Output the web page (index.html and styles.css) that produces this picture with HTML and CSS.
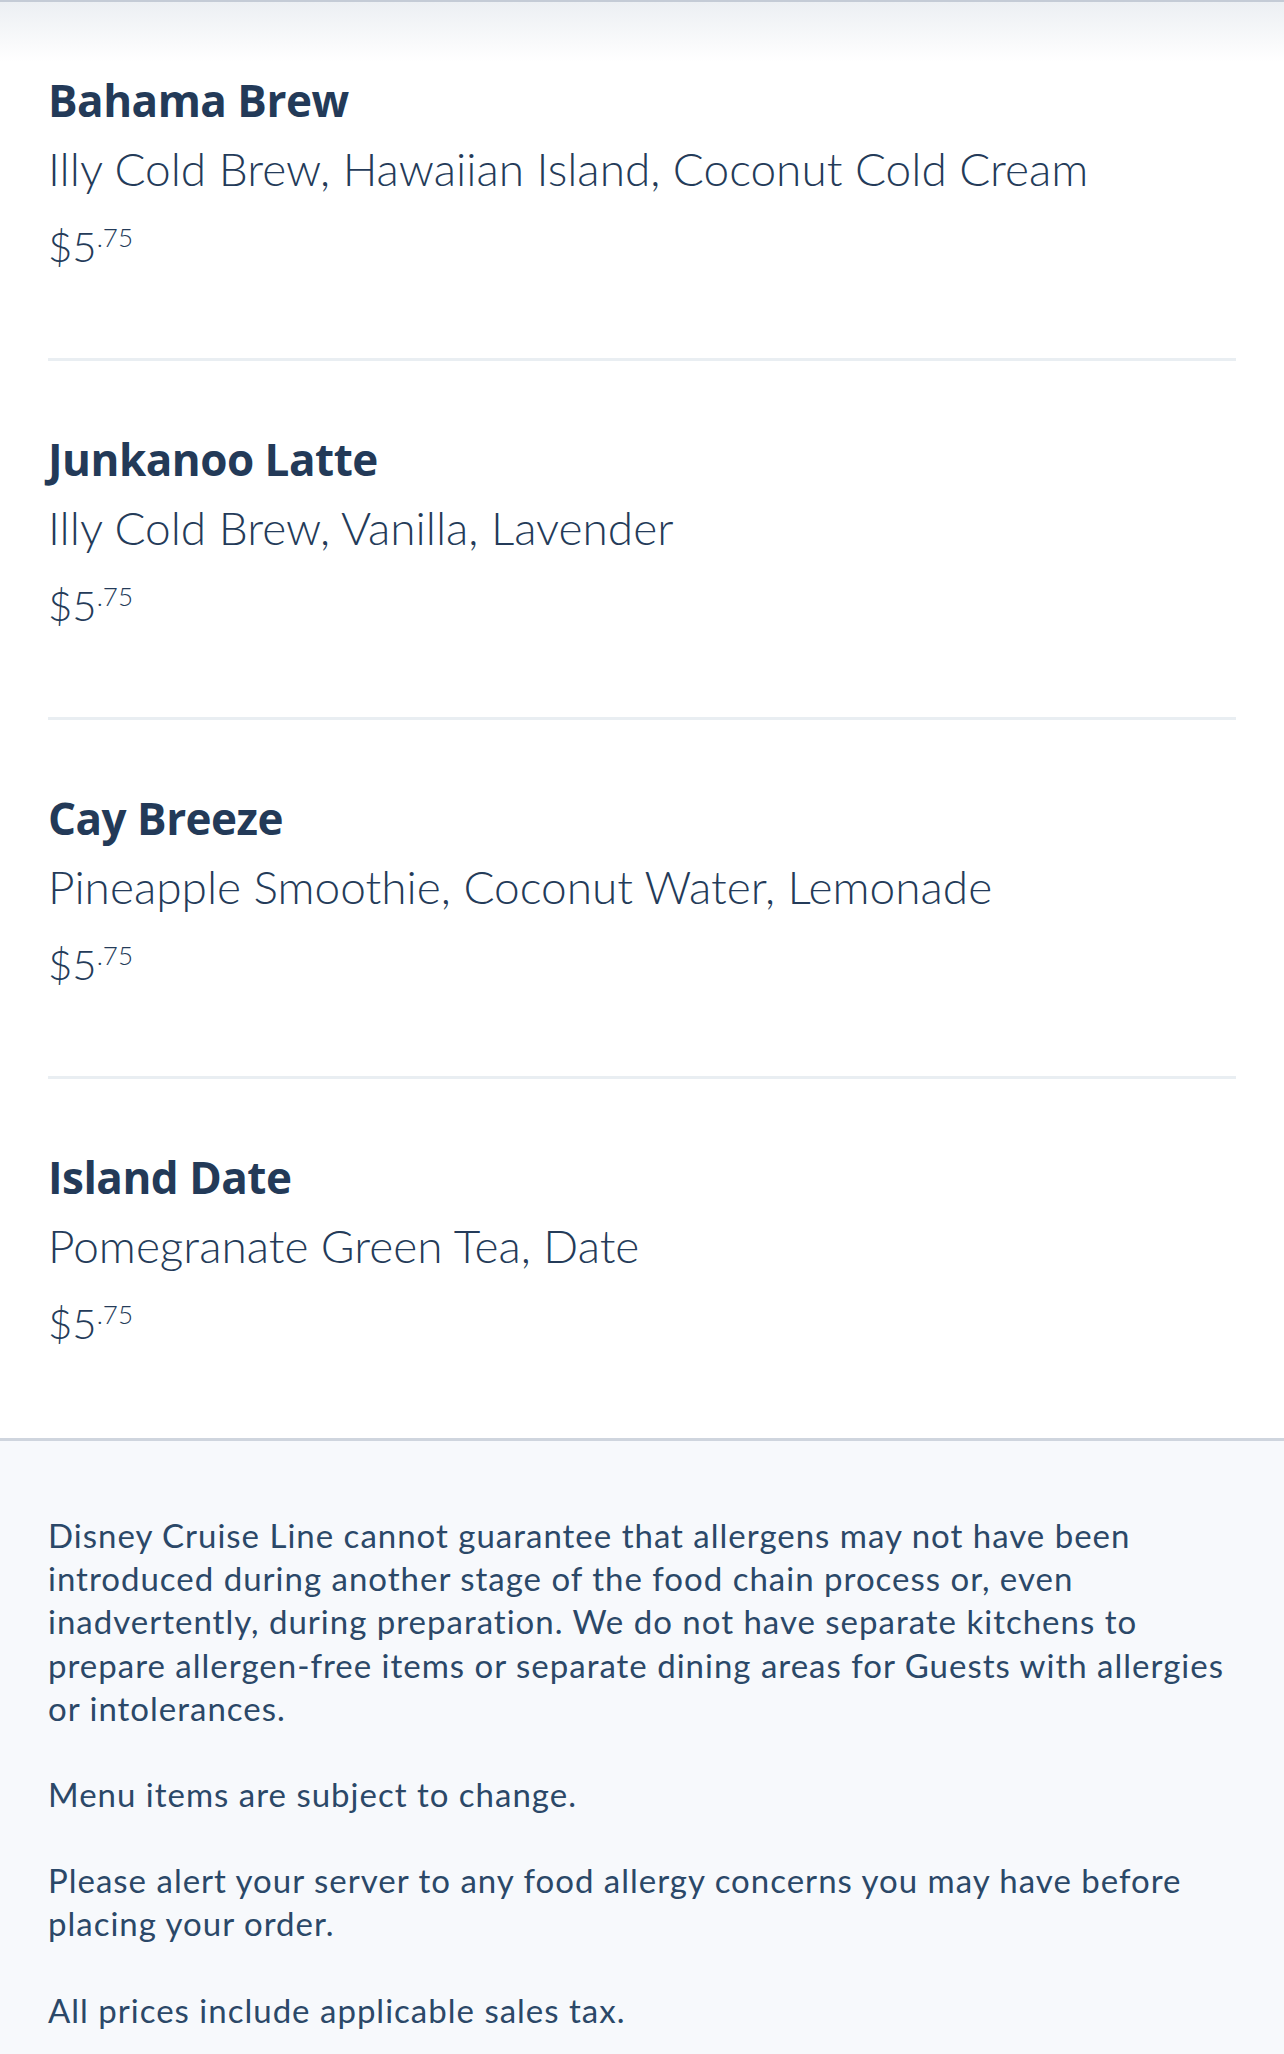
FILE: index.html
```html
<!DOCTYPE html>
<html lang="en">
<head>
<meta charset="utf-8">
<title>Menu</title>
<link rel="stylesheet" href="styles.css">
</head>
<body>
<div class="shade"></div>
<main class="menu">
  <section class="item">
    <h2 class="name">Bahama Brew</h2>
    <p class="desc">Illy Cold Brew, Hawaiian Island, Coconut Cold Cream</p>
    <p class="price">$5<sup>.75</sup></p>
  </section>
  <section class="item">
    <h2 class="name">Junkanoo Latte</h2>
    <p class="desc">Illy Cold Brew, Vanilla, Lavender</p>
    <p class="price">$5<sup>.75</sup></p>
  </section>
  <section class="item">
    <h2 class="name">Cay Breeze</h2>
    <p class="desc">Pineapple Smoothie, Coconut Water, Lemonade</p>
    <p class="price">$5<sup>.75</sup></p>
  </section>
  <section class="item last">
    <h2 class="name">Island Date</h2>
    <p class="desc">Pomegranate Green Tea, Date</p>
    <p class="price">$5<sup>.75</sup></p>
  </section>
</main>
<footer class="notes">
  <p>Disney Cruise Line cannot guarantee that allergens may not have been introduced during another stage of the food chain process or, even inadvertently, during preparation. We do not have separate kitchens to prepare allergen-free items or separate dining areas for Guests with allergies or intolerances.</p>
  <p>Menu items are subject to change.</p>
  <p>Please alert your server to any food allergy concerns you may have before placing your order.</p>
  <p>All prices include applicable sales tax.</p>
</footer>
</body>
</html>
```
FILE: styles.css
```css
* { box-sizing: border-box; }
html, body { margin: 0; padding: 0; background: #ffffff; }
body {
  font-family: Lato, "Open Sans", "Noto Sans", sans-serif;
  color: #243a58;
  position: relative;
  border-top: 2px solid #c4cbd6;
}
.shade {
  position: absolute;
  top: 0; left: 0; right: 0;
  height: 60px;
  background: linear-gradient(to bottom, #eceff3 0%, rgba(255,255,255,0) 100%);
  pointer-events: none;
}
.menu { padding: 0 48px; }
.item {
  padding: 70px 0 76px;
  border-bottom: 3px solid #e9eef2;
}
.item.last { border-bottom: none; padding-bottom: 79px; }
.name {
  margin: 0;
  font-family: "Open Sans", Lato, sans-serif;
  font-size: 44px;
  line-height: 56px;
  font-weight: 700;
  letter-spacing: -0.5px;
  color: #233a58;
}
.desc {
  margin: 0;
  font-size: 46px;
  line-height: 82px;
  font-weight: 300;
  color: #243b59;
}
.price {
  margin: 0;
  font-size: 42px;
  line-height: 72px;
  font-weight: 300;
  color: #243b59;
}
.price sup {
  font-size: 26px;
  vertical-align: 0;
  position: relative;
  top: -15px;
  line-height: 0;
}
.notes {
  background: #f7f9fc;
  border-top: 3px solid #cfd5de;
  padding: 73px 44px 40px 48px;
}
.notes p {
  margin: 0 0 43px;
  font-size: 33px;
  line-height: 43.2px;
  letter-spacing: 1px;
  color: #2b4868;
}
```
